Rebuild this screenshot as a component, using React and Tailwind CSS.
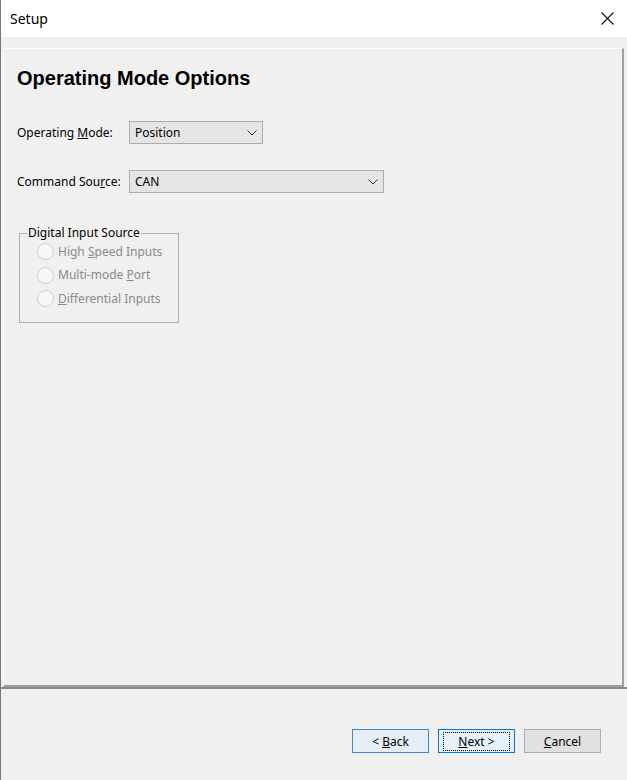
import React from 'react';

const ui = { fontFamily: '"Noto Sans", "DejaVu Sans", sans-serif' };

function Chevron() {
  return (
    <svg width="10" height="6" viewBox="0 0 10 6" className="shrink-0">
      <path d="M0.5 0.5 L5 5 L9.5 0.5" fill="none" stroke="#333" strokeWidth="1" />
    </svg>
  );
}

function Dropdown({ value, width }) {
  return (
    <div
      className={`flex h-[23px] items-center justify-between border border-[#adadad] bg-[#e5e5e5] pl-[5px] pr-[5px] text-[12px] text-black ${width}`}
    >
      <span>{value}</span>
      <Chevron />
    </div>
  );
}

function Radio({ children }) {
  return (
    <div className="flex h-[23.5px] items-center gap-[4px] text-[12px] text-[#8b8b8b]">
      <span className="h-[17px] w-[17px] rounded-full border border-[#cccccc] bg-[#f7f7f7]" />
      <span>{children}</span>
    </div>
  );
}

function Button({ children, className }) {
  return (
    <div className={`flex h-[24px] w-[77px] items-center justify-center border pt-[1px] text-[12px] text-black ${className}`}>
      <span>{children}</span>
    </div>
  );
}

export default function App() {
  return (
    <div className="flex h-[780px] w-[627px] flex-col border-l border-[#7a7a7a] bg-[#f0f0f0]" style={ui}>
      <div className="flex h-[37px] shrink-0 items-center justify-between bg-white pl-[9px] pr-[13px]">
        <span className="text-[14px] text-black">Setup</span>
        <svg width="13" height="13" viewBox="0 0 13 13">
          <path d="M0.5 0.5 L12.5 12.5 M12.5 0.5 L0.5 12.5" stroke="#111" strokeWidth="1.1" />
        </svg>
      </div>

      <div className="flex flex-1 flex-col pl-[2px] pr-[3px] pt-[11px]">
        <div className="flex flex-1 flex-col border-l border-t border-white border-r-2 border-b-2 border-r-[#a0a0a0] border-b-[#a0a0a0] bg-[#f0f0f0] pl-[13px] pt-[15px]">
          <h1 className="text-[20px] font-bold leading-[28px] text-black" style={{ fontFamily: '"Liberation Sans", Arial, sans-serif' }}>
            Operating Mode Options
          </h1>

          <div className="mt-[29px] flex items-center text-[12px] text-black">
            <span className="w-[112px]">
              Operating <u>M</u>ode:
            </span>
            <Dropdown value="Position" width="w-[134px]" />
          </div>

          <div className="mt-[26px] flex items-center text-[12px] text-black">
            <span className="w-[112px]">
              Command Sou<u>r</u>ce:
            </span>
            <Dropdown value="CAN" width="w-[255px]" />
          </div>

          <fieldset className="ml-[2px] mt-[31px] h-[99px] w-[160px] border border-[#b0b0b0] pl-[17px]">
            <legend className="-ml-[10px] px-[1px] text-[12px] text-black">Digital Input Source</legend>
            <div className="-mt-[2px]">
              <Radio>
                High <u>S</u>peed Inputs
              </Radio>
              <Radio>
                Multi-mode <u>P</u>ort
              </Radio>
              <Radio>
                <u>D</u>ifferential Inputs
              </Radio>
            </div>
          </fieldset>
        </div>
      </div>

      <div className="h-[93px] shrink-0 border-t-2 border-[#8a8a8a] pr-[26px] pt-[40px]">
        <div className="flex justify-end gap-[9px]">
          <Button className="border-[#3c8ad0] bg-[#e5edf5]">
            &lt; <u>B</u>ack
          </Button>
          <Button className="border-[#0078d7] bg-[#e5f1fb]">
            <span className="border border-dotted border-black px-[14px] leading-[16px]">
              <u>N</u>ext &gt;
            </span>
          </Button>
          <Button className="border-[#adadad] bg-[#e1e1e1]">
            <u>C</u>ancel
          </Button>
        </div>
      </div>
    </div>
  );
}
